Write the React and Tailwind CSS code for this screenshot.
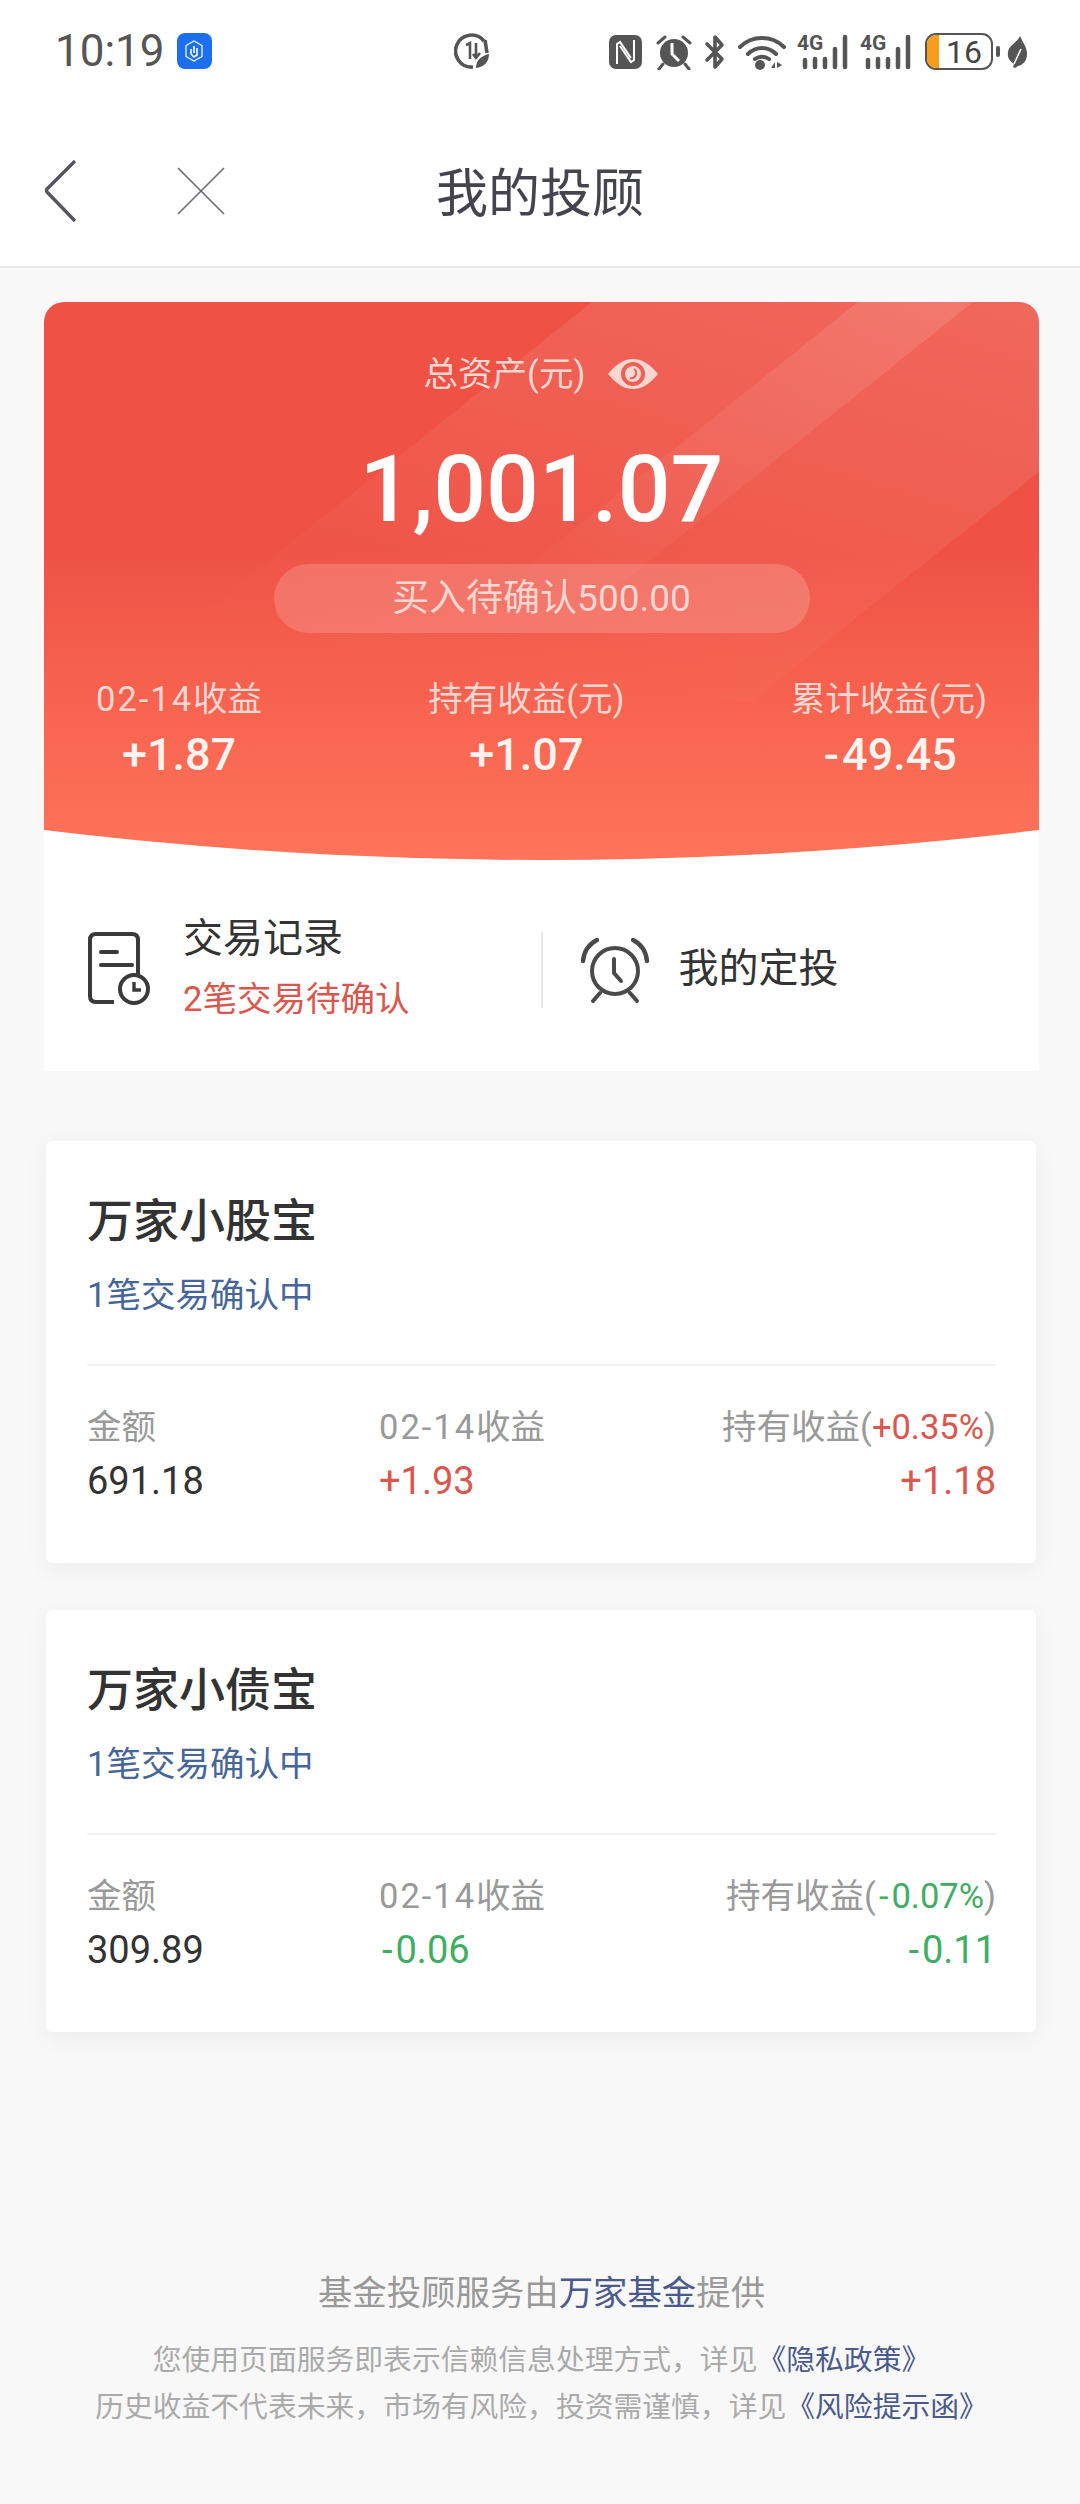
const fontStack = "font-['Roboto','Noto_Sans_CJK_SC',sans-serif]";

// the reference draws its minus sign wider than Roboto's hyphen
function Signed({ value }) {
  if (!value.startsWith('-')) return value;
  return (
    <>
      <span className="mx-[3px]">-</span>
      {value.slice(1)}
    </>
  );
}

function Day() {
  return <span className="tracking-[2px]">02-14</span>;
}

function StatusIcons() {
  return (
    <div className="flex items-center text-[#555]">
      {/* NFC */}
      <svg width="33" height="34" viewBox="0 0 33 34">
        <rect width="33" height="34" rx="7" fill="#555" />
        <path d="M8 29V9l3-2 11 16M25 5v20l-3 2L11 11" fill="none" stroke="#fff" strokeWidth="2" />
      </svg>
      {/* alarm */}
      <svg width="38" height="36" viewBox="0 0 38 36" className="ml-[13px]">
        <circle cx="19" cy="19" r="14" fill="#555" />
        <path d="M17 9v11l7 7" fill="none" stroke="#fff" strokeWidth="3" />
        <path d="M3 9l7-6M35 9l-7-6M8 30l-4 5M30 30l4 5" stroke="#555" strokeWidth="3" strokeLinecap="round" />
      </svg>
      {/* bluetooth */}
      <svg width="22" height="36" viewBox="0 0 22 36" className="ml-[11px]">
        <path d="M3 10l15 15-7 8V3l7 8L3 26" fill="none" stroke="#555" strokeWidth="3.6" strokeLinejoin="round" strokeLinecap="round" />
      </svg>
      {/* wifi */}
      <svg width="48" height="36" viewBox="0 0 48 36" className="ml-[12px]">
        <path d="M2 13C14 1 34 1 46 13M10 20c8-8 20-8 28 0M17 25c4-3 10-3 14 0" fill="none" stroke="#555" strokeWidth="4" strokeLinecap="round" />
        <circle cx="22" cy="31" r="5" fill="#555" />
        <path d="M33 34l4-6v6zM39 28l5 3-5 3z" fill="#555" />
      </svg>
      {[0, 1].map((i) => (
        <svg key={i} width="52" height="36" viewBox="0 0 52 36" className="ml-[11px] overflow-visible">
          <text x="0" y="16" fontSize="21" fontWeight="700" fontFamily="Roboto" fill="#555">4G</text>
          <g stroke="#555" strokeWidth="4.5" strokeLinecap="round">
            <path d="M8 26v7M18 25v8M28 25v8" />
            <path d="M38 15v18M48 3v30" />
          </g>
        </svg>
      ))}
      {/* battery */}
      <div className="relative ml-[13px] flex h-[37px] w-[68px] items-center justify-center overflow-hidden rounded-[11px] border-[2.5px] border-[#555] bg-white">
        <div className="absolute left-0 top-0 h-full w-[12px] bg-[#f99c1c]" />
        <span className="relative ml-[10px] text-[32px] leading-none text-[#444]">16</span>
      </div>
      <div className="ml-[3px] h-[11px] w-[4px] rounded-full bg-[#555]" />
      <svg width="20" height="32" viewBox="0 0 20 32" className="ml-[7px]">
        <path d="M13 0C16 7 20 11 20 18c0 7-4 11-9 12l-3 2-2-1 1-3C3 25 0 22 1 16 2 9 10 7 13 0z" fill="#555" />
        <path d="M7 28L14 13" stroke="#fff" strokeWidth="1.6" />
      </svg>
    </div>
  );
}

function StatusBar() {
  return (
    <div className="relative flex h-[100px] items-start bg-white pl-[55px] pt-[33px]">
      <span className="text-[44px] leading-[36px] text-[#555]">10:19</span>
      <div className="ml-[12px] flex h-[36px] w-[35px] items-center justify-center rounded-[8px] bg-[#1d6ff2]">
        <svg width="18" height="22" viewBox="0 0 18 22">
          <path d="M9 1l8 4.5v11L9 21l-8-4.5v-11z" fill="none" stroke="#fff" strokeWidth="1.2" />
          <path d="M6 9v5l3 3 3-2V8M9 6v7" fill="none" stroke="#fff" strokeWidth="1.6" />
        </svg>
      </div>
      {/* data saver */}
      <svg width="36" height="36" viewBox="0 0 36 36" className="ml-[242px]">
        <path d="M30 8A16 16 0 1 0 19 34" fill="none" stroke="#555" strokeWidth="3.6" />
        <path d="M31 7l2 13" stroke="#555" strokeWidth="3.6" />
        <path d="M12 12l4-2v16M22 10v14M26 20l-4 5-3-4" fill="none" stroke="#555" strokeWidth="2.6" />
        <path d="M35 21c0 8-5 13-13 14 0-8 5-12 13-14z" fill="#555" />
      </svg>
      <div className="ml-auto mr-[53px]">
        <StatusIcons />
      </div>
    </div>
  );
}

function NavBar() {
  return (
    <div className="relative flex h-[168px] items-center justify-center border-b-2 border-[#e8e8e8] bg-white pt-[24px]">
      <svg width="34" height="64" viewBox="0 0 34 64" className="absolute left-[44px] top-[59px]">
        <path d="M31 2L3 30q-1 1 0 3l28 29" fill="none" stroke="#55555f" strokeWidth="3.4" />
      </svg>
      <svg width="48" height="48" viewBox="0 0 48 48" className="absolute left-[177px] top-[67px]">
        <path d="M1 1l46 46M47 1L1 47" fill="none" stroke="#6a6a72" strokeWidth="1.6" />
      </svg>
      <span className="text-[52px] leading-[60px] text-[#44444f]">我的投顾</span>
    </div>
  );
}

function Stat({ label, value }) {
  return (
    <div className="flex flex-col items-center">
      <span className="text-[34.5px] leading-[42px] text-[#fcd6d1]">{label}</span>
      <span className="mt-[9px] text-[45px] font-medium leading-[52px] text-[#fff3f0]">
        <Signed value={value} />
      </span>
    </div>
  );
}

function Hero() {
  return (
    <div className="relative h-[558px] bg-gradient-to-b from-[#ef5245] from-45% to-[#ff745a] [clip-path:circle(4148px_at_50%_calc(100%-4148px))]">
      {/* diagonal light bands on the card */}
      <svg width="995" height="558" viewBox="0 0 995 558" className="absolute left-0 top-0">
        <defs>
          <linearGradient id="band" x1="1" y1="0" x2="0.2" y2="0.9">
            <stop offset="0" stopColor="#fff" stopOpacity="0.14" />
            <stop offset="0.75" stopColor="#fff" stopOpacity="0.03" />
            <stop offset="1" stopColor="#fff" stopOpacity="0" />
          </linearGradient>
          <linearGradient id="stripe" x1="1" y1="0" x2="0" y2="1">
            <stop offset="0" stopColor="#fff" stopOpacity="0.12" />
            <stop offset="1" stopColor="#fff" stopOpacity="0" />
          </linearGradient>
        </defs>
        <polygon points="548,0 1207,0 707,400 48,400" fill="url(#band)" />
        <polygon points="814,0 929,0 554,300 439,300" fill="url(#stripe)" />
      </svg>
      <div className="relative flex flex-col items-center">
        <div className="mt-[52px] flex h-[40px] items-center text-[34.5px] leading-[40px] text-[#fcd6d1]">
          <span>总资产(元)</span>
          <svg width="52" height="32" viewBox="0 0 52 32" className="ml-[22px]">
            <path d="M1 16C10 5 18 1 26 1s16 4 25 15c-9 11-17 15-25 15S10 27 1 16z" fill="#fcd6d1" />
            <circle cx="26" cy="16" r="10" fill="none" stroke="#ee5f54" strokeWidth="4" />
            <path d="M27 11a5 5 0 0 1-4 9" fill="none" stroke="#ee5f54" strokeWidth="2" />
          </svg>
        </div>
        <div className="mt-[46px] text-[93px] font-medium leading-[100px] text-white">1,001.07</div>
        <div className="mt-[24px] flex h-[69px] w-[536px] items-center justify-center rounded-full bg-white/[0.17] text-[37px] text-[#fcd6d1]">
          买入待确认500.00
        </div>
        <div className="mt-[45px] flex w-full justify-between px-[52px]">
          <Stat label={<><Day />收益</>} value="+1.87" />
          <Stat label="持有收益(元)" value="+1.07" />
          <Stat label="累计收益(元)" value="-49.45" />
        </div>
      </div>
    </div>
  );
}

function DocIcon() {
  return (
    <svg width="62" height="74" viewBox="0 0 62 74" fill="none" stroke="#3a3a3a" strokeWidth="4">
      <path d="M26 70H8q-6 0-6-6V8q0-6 6-6h36q6 0 6 6v36" />
      <path d="M13 20h16M13 33h31" strokeLinecap="round" />
      <circle cx="46" cy="57" r="14" />
      <path d="M46 50v8h7" strokeWidth="3.4" />
    </svg>
  );
}

function AlarmIcon() {
  return (
    <svg width="70" height="66" viewBox="0 0 70 66" fill="none" stroke="#4a4a4a" strokeWidth="4">
      <circle cx="35" cy="34" r="23" />
      <path d="M34 22v14l7 8" strokeLinecap="round" />
      <path d="M3 24C4 14 9 7 17 3M67 24C66 14 61 7 53 3" strokeLinecap="round" strokeWidth="4.4" />
      <path d="M20 56l-7 8M50 56l7 8" strokeLinecap="round" />
    </svg>
  );
}

function Actions() {
  return (
    <div className="flex h-[211px] items-start">
      <div className="ml-[44px] mt-[72px]">
        <DocIcon />
      </div>
      <div className="ml-[33px] mt-[54px] flex flex-col">
        <span className="text-[40px] leading-[50px] text-[#333]">交易记录</span>
        <span className="mt-[13px] text-[34.5px] leading-[44px] text-[#d9574d]">2笔交易待确认</span>
      </div>
      <div className="ml-[132px] mt-[72px] h-[76px] w-[2px] bg-[#e6e6e6]" />
      <div className="ml-[37px] mt-[77px]">
        <AlarmIcon />
      </div>
      <span className="ml-[28px] mt-[84px] text-[40px] leading-[50px] text-[#333]">我的定投</span>
    </div>
  );
}

function FundCard({ name, pct, today, hold, amount, up }) {
  const color = up ? 'text-[#d9574d]' : 'text-[#3fae63]';
  return (
    <div className="ml-[2px] mr-[3px] h-[422px] rounded-[6px] bg-white pl-[41px] pr-[40px] pt-[52px] shadow-[0_6px_24px_rgba(0,0,0,0.05)]">
      <div className="text-[46px] font-medium leading-[56px] text-[#333]">{name}</div>
      <div className="mt-[24px] text-[34.5px] leading-[44px] text-[#46669a]">1笔交易确认中</div>
      <div className="mt-[47px] h-[2px] bg-[#f2f2f2]" />
      <div className="mt-[39px] flex items-start">
        <div className="w-[292px]">
          <div className="text-[34.5px] leading-[44px] text-[#999]">金额</div>
          <div className="mt-[10px] text-[38px] leading-[44px] text-[#333]">{amount}</div>
        </div>
        <div className="flex-1">
          <div className="text-[34.5px] leading-[44px] text-[#999]">
            <Day />收益
          </div>
          <div className={`mt-[10px] text-[38px] leading-[44px] ${color}`}>
            <Signed value={today} />
          </div>
        </div>
        <div className="text-right">
          <div className="text-[34.5px] leading-[44px] text-[#999]">
            持有收益(<span className={color}><Signed value={pct} /></span>)
          </div>
          <div className={`mt-[10px] text-[38px] leading-[44px] ${color}`}>
            <Signed value={hold} />
          </div>
        </div>
      </div>
    </div>
  );
}

function Footer() {
  return (
    <div className="mt-auto flex flex-col items-center pb-[73px]">
      <div className="text-[34.4px] leading-[44px] text-[#999]">
        基金投顾服务由<span className="text-[#4a5a8c]">万家基金</span>提供
      </div>
      <div className="mt-[22px] text-[28.8px] leading-[47px] text-[#aaa]">
        您使用页面服务即表示信赖信息处理方式，详见<span className="text-[#4a5a8c]">《隐私政策》</span>
      </div>
      <div className="text-[28.8px] leading-[47px] text-[#aaa]">
        历史收益不代表未来，市场有风险，投资需谨慎，详见<span className="text-[#4a5a8c]">《风险提示函》</span>
      </div>
    </div>
  );
}

export default function App() {
  return (
    <div className={`flex h-[2504px] w-[1080px] flex-col overflow-hidden bg-[#f8f8f8] ${fontStack}`}>
      <StatusBar />
      <NavBar />
      <div className="flex flex-1 flex-col pl-[44px] pr-[41px] pt-[34px]">
        <div className="overflow-hidden rounded-t-[20px] bg-white">
          <Hero />
          <Actions />
        </div>
        <div className="mt-[70px] flex flex-col gap-[47px]">
          <FundCard name="万家小股宝" amount="691.18" today="+1.93" pct="+0.35%" hold="+1.18" up />
          <FundCard name="万家小债宝" amount="309.89" today="-0.06" pct="-0.07%" hold="-0.11" />
        </div>
        <Footer />
      </div>
    </div>
  );
}
